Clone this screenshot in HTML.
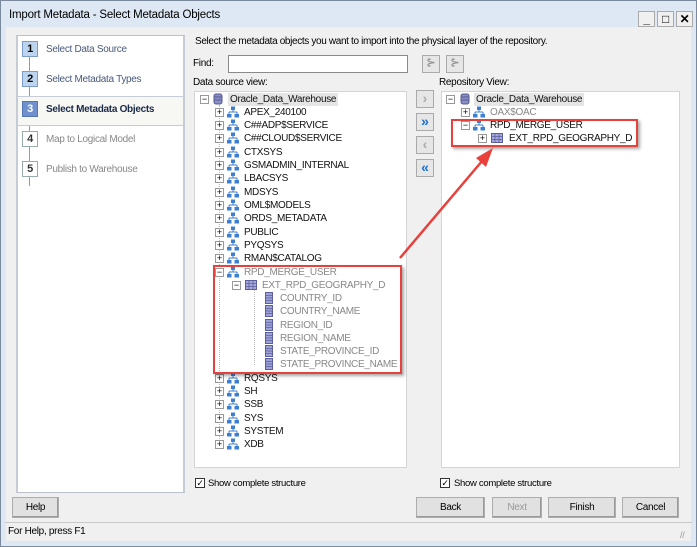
<!DOCTYPE html>
<html><head><meta charset="utf-8">
<style>
*{box-sizing:border-box;margin:0;padding:0}
body{width:697px;height:547px;overflow:hidden;background:#f0f0f0;font-family:"Liberation Sans",sans-serif;font-size:10px;letter-spacing:-0.3px;color:#000;position:relative}
.abs{position:absolute}
.win{position:absolute;left:0;top:0;width:697px;height:547px;border:1px solid #7a8a9c;background:#f0f0f0}
.frame{position:absolute;left:1px;top:1px;width:695px;height:545px;border:5px solid #dde8f4;border-top:0}
.title{position:absolute;left:1px;top:1px;width:695px;height:26px;background:#dde8f4;padding:8px 0 0 8px;font-size:11.5px;letter-spacing:-0.2px}
.tb{position:absolute;top:6px;width:17px;height:16px;border:1px solid #aaa;background:#f0f0f0;font-size:12px;text-align:center;line-height:14px;font-weight:bold}
.lp{position:absolute;left:16px;top:35px;width:169px;height:458px;background:#fff;border:1px solid #b9c0cc;border-left:2px solid #c6ccd6;border-right:2px solid #c6ccd6}
.step{position:absolute;left:22px;width:16px;height:16px;border:1px solid #9aa;text-align:center;font-size:11px;line-height:14px;font-weight:bold;background:#fff;color:#333}
.st{position:absolute;left:46px;font-size:10px;color:#4a5a7a}
.tree{position:absolute;background:#fff;border:1px solid #d4d4d4}
.r{position:absolute;height:13px;line-height:13px;white-space:nowrap;font-size:10px;color:#111}
.g{color:#888}
.ex{position:absolute;width:9px;height:9px;border:1px solid #999;background:#fff;font-size:9px;line-height:7px;text-align:center;color:#000;letter-spacing:0}
.btn{position:absolute;height:21px;border:1px solid #adadad;background:#e1e1e1;text-align:center;line-height:19px;font-size:10px;box-shadow:inset -1px -1px 0 #999}
.sb{position:absolute;width:18px;height:18px;border:1px solid #aaa;background:#e6e6e6;text-align:center;line-height:15px;font-weight:bold;font-size:14px;letter-spacing:0}
.red{position:absolute;border:2px solid #e8403a;box-shadow:2px 2px 3px rgba(0,0,0,.35)}
</style></head><body>
<div class="win"></div>
<div class="frame"></div>
<div class="title">Import Metadata - Select Metadata Objects</div>
<div class="tb" style="left:638px;top:11px">_</div>
<div class="tb" style="left:657px;top:11px">□</div>
<div class="tb" style="left:676px;top:11px">✕</div>

<div class="lp">
<div class="abs" style="left:11px;top:20px;width:1px;height:130px;background:#999"></div>
<div class="abs" style="left:0;top:60px;width:165px;height:30px;background:#f7f7f3;border-top:1px solid #c6ccd6;border-bottom:1px solid #c6ccd6"></div>
</div>
<div class="step" style="top:41px;background:#bcd4ee;border-color:#7e9cc8;color:#000">1</div>
<div class="st" style="top:44px">Select Data Source</div>
<div class="step" style="top:71px;background:#bcd4ee;border-color:#7e9cc8;color:#000">2</div>
<div class="st" style="top:74px">Select Metadata Types</div>
<div class="step" style="top:101px;background:#6f90cc;border-color:#5577b5;color:#fff">3</div>
<div class="st" style="top:104px;font-weight:bold;color:#1a2a4a">Select Metadata Objects</div>
<div class="step" style="top:131px">4</div>
<div class="st" style="top:134px;color:#888">Map to Logical Model</div>
<div class="step" style="top:161px">5</div>
<div class="st" style="top:164px;color:#888">Publish to Warehouse</div>

<div class="abs" style="left:195px;top:36px;font-size:10px;letter-spacing:-0.35px">Select the metadata objects you want to import into the physical layer of the repository.</div>
<div class="abs" style="left:193px;top:58px">Find:</div>
<div class="abs" style="left:228px;top:55px;width:180px;height:18px;border:1px solid #8a8a8a;background:#fff"></div>
<div class="sb" style="left:422px;top:55px;color:#999;font-size:11px">⊱</div>
<div class="sb" style="left:446px;top:55px;color:#999;font-size:11px">⊱</div>
<div class="abs" style="left:193px;top:77px">Data source view:</div>
<div class="abs" style="left:439px;top:77px">Repository View:</div>

<div class="tree" style="left:194px;top:91px;width:213px;height:377px"></div>
<div class="tree" style="left:441px;top:91px;width:239px;height:377px"></div>

<div class="sb" style="left:416px;top:90px;color:#aaa">›</div>
<div class="sb" style="left:416px;top:113px;color:#1a6fd6">»</div>
<div class="sb" style="left:416px;top:136px;color:#aaa">‹</div>
<div class="sb" style="left:416px;top:159px;color:#1a6fd6">«</div>

<svg width="0" height="0" style="position:absolute"><defs>
<symbol id="sc" viewBox="0 0 12 12"><rect x="4" y="0.5" width="4" height="3.5" fill="#3d7fd0"/><path d="M6 4v2M2 6h8M2 6v2M10 6v2" stroke="#3d7fd0" fill="none"/><rect x="0" y="8" width="4.5" height="3.5" fill="#3d7fd0"/><rect x="7.5" y="8" width="4.5" height="3.5" fill="#3d7fd0"/></symbol>
<symbol id="db" viewBox="0 0 12 12"><rect x="2" y="1" width="8" height="10" rx="2" fill="#8b8fc8" stroke="#555a90"/><path d="M2 4h8M2 7h8" stroke="#555a90"/></symbol>
<symbol id="tb" viewBox="0 0 12 12"><rect x="0.5" y="1.5" width="11" height="9" fill="#a7a9dc" stroke="#5b5f9a"/><path d="M0.5 4.5h11M0.5 7.5h11M4 1.5v9M8 1.5v9" stroke="#5b5f9a" stroke-width=".8"/></symbol>
<symbol id="co" viewBox="0 0 12 12"><rect x="2.5" y="0.5" width="7" height="11" fill="#9ea2d8" stroke="#5b5f9a"/><path d="M2.5 3.5h7M2.5 6h7M2.5 8.5h7" stroke="#5b5f9a" stroke-width=".8"/></symbol>
</defs></svg>

<!-- left tree -->
<div class="abs" style="left:219px;top:105px;height:340px;border-left:1px dotted #bbb"></div>
<div class="abs" style="left:254px;top:290px;height:75px;border-left:1px dotted #bbb"></div>

<div class="ex" style="left:200px;top:95px">−</div><svg class="abs" style="left:212px;top:93px" width="12" height="12"><use href="#db"/></svg><div class="r" style="left:228px;top:93px;background:#e5e5e5;padding:0 2px">Oracle_Data_Warehouse</div>

<div class="ex" style="left:215px;top:108px">+</div><svg class="abs" style="left:227px;top:106px" width="12" height="12"><use href="#sc"/></svg><div class="r" style="left:244px;top:106px">APEX_240100</div>
<div class="ex" style="left:215px;top:121px">+</div><svg class="abs" style="left:227px;top:119px" width="12" height="12"><use href="#sc"/></svg><div class="r" style="left:244px;top:119px">C##ADP$SERVICE</div>
<div class="ex" style="left:215px;top:134px">+</div><svg class="abs" style="left:227px;top:132px" width="12" height="12"><use href="#sc"/></svg><div class="r" style="left:244px;top:132px">C##CLOUD$SERVICE</div>
<div class="ex" style="left:215px;top:148px">+</div><svg class="abs" style="left:227px;top:146px" width="12" height="12"><use href="#sc"/></svg><div class="r" style="left:244px;top:146px">CTXSYS</div>
<div class="ex" style="left:215px;top:161px">+</div><svg class="abs" style="left:227px;top:159px" width="12" height="12"><use href="#sc"/></svg><div class="r" style="left:244px;top:159px">GSMADMIN_INTERNAL</div>
<div class="ex" style="left:215px;top:174px">+</div><svg class="abs" style="left:227px;top:172px" width="12" height="12"><use href="#sc"/></svg><div class="r" style="left:244px;top:172px">LBACSYS</div>
<div class="ex" style="left:215px;top:188px">+</div><svg class="abs" style="left:227px;top:186px" width="12" height="12"><use href="#sc"/></svg><div class="r" style="left:244px;top:186px">MDSYS</div>
<div class="ex" style="left:215px;top:201px">+</div><svg class="abs" style="left:227px;top:199px" width="12" height="12"><use href="#sc"/></svg><div class="r" style="left:244px;top:199px">OML$MODELS</div>
<div class="ex" style="left:215px;top:214px">+</div><svg class="abs" style="left:227px;top:212px" width="12" height="12"><use href="#sc"/></svg><div class="r" style="left:244px;top:212px">ORDS_METADATA</div>
<div class="ex" style="left:215px;top:228px">+</div><svg class="abs" style="left:227px;top:226px" width="12" height="12"><use href="#sc"/></svg><div class="r" style="left:244px;top:226px">PUBLIC</div>
<div class="ex" style="left:215px;top:241px">+</div><svg class="abs" style="left:227px;top:239px" width="12" height="12"><use href="#sc"/></svg><div class="r" style="left:244px;top:239px">PYQSYS</div>
<div class="ex" style="left:215px;top:254px">+</div><svg class="abs" style="left:227px;top:252px" width="12" height="12"><use href="#sc"/></svg><div class="r" style="left:244px;top:252px">RMAN$CATALOG</div>
<div class="ex" style="left:215px;top:268px">−</div><svg class="abs" style="left:227px;top:266px" width="12" height="12"><use href="#sc"/></svg><div class="r g" style="left:244px;top:266px">RPD_MERGE_USER</div>
<div class="ex" style="left:232px;top:281px">−</div><svg class="abs" style="left:245px;top:279px" width="12" height="12"><use href="#tb"/></svg><div class="r g" style="left:262px;top:279px">EXT_RPD_GEOGRAPHY_D</div>
<svg class="abs" style="left:263px;top:292px" width="12" height="12"><use href="#co"/></svg><div class="r g" style="left:280px;top:292px">COUNTRY_ID</div>
<svg class="abs" style="left:263px;top:305px" width="12" height="12"><use href="#co"/></svg><div class="r g" style="left:280px;top:305px">COUNTRY_NAME</div>
<svg class="abs" style="left:263px;top:319px" width="12" height="12"><use href="#co"/></svg><div class="r g" style="left:280px;top:319px">REGION_ID</div>
<svg class="abs" style="left:263px;top:332px" width="12" height="12"><use href="#co"/></svg><div class="r g" style="left:280px;top:332px">REGION_NAME</div>
<svg class="abs" style="left:263px;top:345px" width="12" height="12"><use href="#co"/></svg><div class="r g" style="left:280px;top:345px">STATE_PROVINCE_ID</div>
<svg class="abs" style="left:263px;top:358px" width="12" height="12"><use href="#co"/></svg><div class="r g" style="left:280px;top:358px">STATE_PROVINCE_NAME</div>
<div class="ex" style="left:215px;top:374px">+</div><svg class="abs" style="left:227px;top:372px" width="12" height="12"><use href="#sc"/></svg><div class="r" style="left:244px;top:372px">RQSYS</div>
<div class="ex" style="left:215px;top:387px">+</div><svg class="abs" style="left:227px;top:385px" width="12" height="12"><use href="#sc"/></svg><div class="r" style="left:244px;top:385px">SH</div>
<div class="ex" style="left:215px;top:400px">+</div><svg class="abs" style="left:227px;top:398px" width="12" height="12"><use href="#sc"/></svg><div class="r" style="left:244px;top:398px">SSB</div>
<div class="ex" style="left:215px;top:414px">+</div><svg class="abs" style="left:227px;top:412px" width="12" height="12"><use href="#sc"/></svg><div class="r" style="left:244px;top:412px">SYS</div>
<div class="ex" style="left:215px;top:427px">+</div><svg class="abs" style="left:227px;top:425px" width="12" height="12"><use href="#sc"/></svg><div class="r" style="left:244px;top:425px">SYSTEM</div>
<div class="ex" style="left:215px;top:440px">+</div><svg class="abs" style="left:227px;top:438px" width="12" height="12"><use href="#sc"/></svg><div class="r" style="left:244px;top:438px">XDB</div>

<!-- right tree -->
<div class="ex" style="left:446px;top:95px">−</div><svg class="abs" style="left:459px;top:93px" width="12" height="12"><use href="#db"/></svg><div class="r" style="left:474px;top:93px;background:#e5e5e5;padding:0 2px">Oracle_Data_Warehouse</div>
<div class="ex" style="left:461px;top:108px">+</div><svg class="abs" style="left:473px;top:106px" width="12" height="12"><use href="#sc"/></svg><div class="r g" style="left:490px;top:106px">OAX$OAC</div>
<div class="ex" style="left:461px;top:121px">−</div><svg class="abs" style="left:473px;top:119px" width="12" height="12"><use href="#sc"/></svg><div class="r" style="left:490px;top:119px">RPD_MERGE_USER</div>
<div class="ex" style="left:478px;top:134px">+</div><svg class="abs" style="left:491px;top:132px" width="12" height="12"><use href="#tb"/></svg><div class="r" style="left:509px;top:132px">EXT_RPD_GEOGRAPHY_D</div>

<div class="red" style="left:213px;top:265px;width:189px;height:109px"></div>
<div class="red" style="left:451px;top:119px;width:187px;height:28px"></div>
<svg class="abs" style="left:390px;top:140px" width="110" height="130"><line x1="10" y1="118" x2="98" y2="14" stroke="#e8403a" stroke-width="2.5"/><polygon points="103,8 86,18 96,27" fill="#e8403a"/></svg>

<div class="abs" style="left:195px;top:478px;width:10px;height:10px;border:1px solid #333;background:#fff;font-size:9px;line-height:8px;text-align:center">✓</div>
<div class="abs" style="left:208px;top:478px;font-size:9.5px">Show complete structure</div>
<div class="abs" style="left:440px;top:478px;width:10px;height:10px;border:1px solid #333;background:#fff;font-size:9px;line-height:8px;text-align:center">✓</div>
<div class="abs" style="left:454px;top:478px;font-size:9.5px">Show complete structure</div>

<div class="btn" style="left:12px;top:497px;width:47px">Help</div>
<div class="btn" style="left:416px;top:497px;width:69px">Back</div>
<div class="btn" style="left:492px;top:497px;width:50px;color:#999">Next</div>
<div class="btn" style="left:548px;top:497px;width:68px">Finish</div>
<div class="btn" style="left:622px;top:497px;width:57px">Cancel</div>

<div class="abs" style="left:5px;top:522px;width:687px;height:19px;border-top:1px solid #c8c8c8;padding:3px 0 0 3px;font-size:10px">For Help, press F1</div>
<div class="abs" style="left:680px;top:530px;font-size:9px;color:#999">//</div>
</body></html>
